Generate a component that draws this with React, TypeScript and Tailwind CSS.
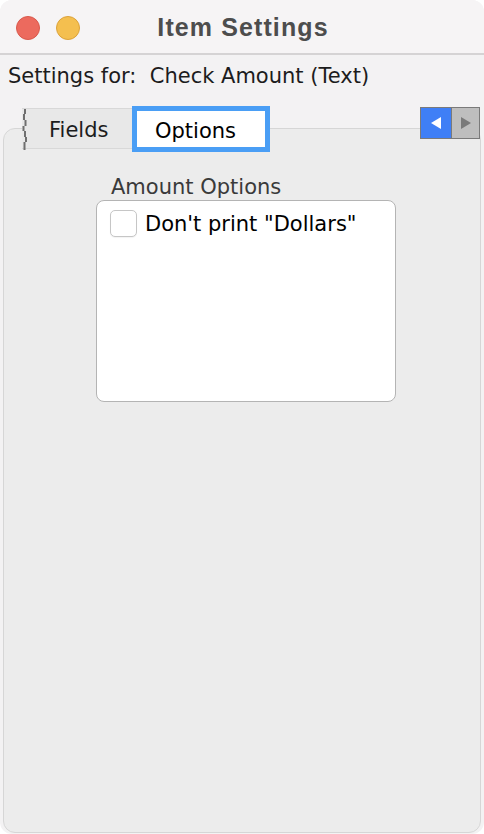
function TornEdge() {
  return (
    <svg width="6" height="41" viewBox="0 0 6 41" className="shrink-0">
      <path
        d="M3 0 V5 M2 5 V11 M3.5 11 V17 M1.5 17 V22 M3 22 V28 M4 28 V33 M2.5 33 V41"
        stroke="#6f6f6f"
        strokeWidth="2"
        fill="none"
      />
    </svg>
  );
}

export default function App() {
  return (
    <div className="h-[834px] w-[484px] bg-white font-['DejaVu_Sans',sans-serif]">
      <div className="flex h-full flex-col overflow-hidden rounded-[12px] bg-[#f3f2f3]">
        <header className="relative flex h-[55px] shrink-0 items-center justify-center border-b-2 border-[#d5d3d4] bg-[#f6f4f5]">
          <div className="absolute left-[16px] top-[16px] flex gap-[16px]">
            <span className="h-[24px] w-[24px] rounded-full border border-[#d9594c] bg-[#ec6a5e]" />
            <span className="h-[24px] w-[24px] rounded-full border border-[#dca23a] bg-[#f4bf4f]" />
          </div>
          <h1 className="pl-[2px] font-['Liberation_Sans',Arial,sans-serif] text-[25px] font-bold leading-[28px] tracking-[1.1px] text-[#4d4d4d]">
            Item Settings
          </h1>
        </header>

        <p className="mt-[9px] whitespace-pre pl-[8px] text-[21px] leading-[24px] text-[#1c1c1c]">
          Settings for:  Check Amount (Text)
        </p>

        <div className="relative z-10 mt-[18px] flex h-[46px] shrink-0 items-start">
          <div className="ml-[22px] mt-[2px] flex h-[41px] w-[110px] border-y border-[#d8d8d8] bg-[#e8e8e8]">
            <TornEdge />
            <span className="pl-[21px] pt-[9px] text-[21px] leading-[24px] text-[#1c1c1c]">Fields</span>
          </div>
          <div className="h-[46px] w-[138px] border-[5px] border-[#4a9ef5] bg-white pl-[18px] pt-[8px] text-[21px] leading-[24px] text-black">
            Options
          </div>
          <div className="ml-auto mr-[4px] mt-[1px] flex h-[32px] border border-[#7a7a7a]">
            <button className="flex w-[30px] items-center justify-center bg-[#3f7ff6]">
              <svg width="10" height="12" viewBox="0 0 10 12">
                <path d="M10 0 V12 L0 6 Z" fill="#ffffff" />
              </svg>
            </button>
            <button className="flex w-[28px] items-center justify-center border-l border-[#7a7a7a] bg-[#bebebe]">
              <svg width="10" height="12" viewBox="0 0 10 12">
                <path d="M0 0 V12 L10 6 Z" fill="#7a7a7a" />
              </svg>
            </button>
          </div>
        </div>

        <section className="mx-[3px] -mt-[24px] mb-[1px] flex-1 rounded-[12px] border border-[#d6d6d6] bg-[#ececec]">
          <div className="ml-[92px] mt-[46px] w-[300px]">
            <h2 className="pl-[15px] text-[21px] leading-[24px] text-[#3a3a3a]">Amount Options</h2>
            <div className="mt-[1px] h-[202px] rounded-[8px] border border-[#b4b4b4] bg-white pl-[13px] pt-[9px]">
              <label className="flex items-center">
                <span className="h-[27px] w-[27px] rounded-[5px] border border-[#c6c6c6] bg-white shadow-[0_1px_1px_rgba(0,0,0,0.05)]" />
                <span className="ml-[8px] text-[21px] leading-[24px] text-black">Don't print "Dollars"</span>
              </label>
            </div>
          </div>
        </section>
      </div>
    </div>
  );
}
